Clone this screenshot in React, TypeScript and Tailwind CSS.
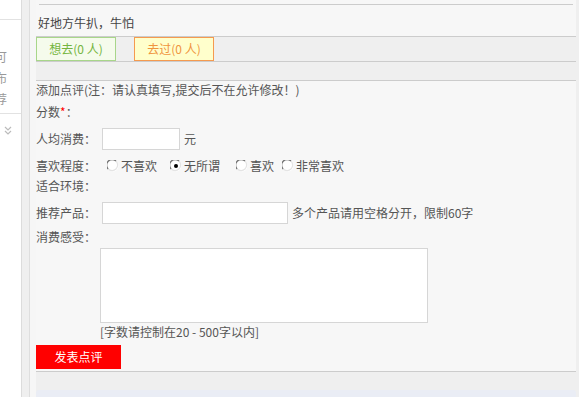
import React from "react";

function Radio({ checked = false }: { checked?: boolean }) {
  return (
    <svg width="12" height="12" viewBox="0 0 12 12" className="shrink-0">
      <circle cx="6" cy="6" r="5.5" fill="#ffffff" />
      <path d="M1.2 9 A5.2 5.2 0 0 1 9 1.2" fill="none" stroke="#6f6f6f" strokeWidth="1.2" />
      <path d="M9 1.2 A5.2 5.2 0 0 1 1.2 9" fill="none" stroke="#e4e4e4" strokeWidth="1.2" />
      {checked && <circle cx="6" cy="6" r="2" fill="#000000" />}
    </svg>
  );
}

export default function App() {
  return (
    <div className="flex w-[579px] h-[397px] overflow-hidden bg-[#efefef] text-[12px] leading-[18px] text-[#555] font-['Noto_Sans_CJK_SC','Noto_Sans',sans-serif]">
      {/* left sidebar */}
      <aside className="w-[22px] shrink-0 bg-white border-r border-[#dcdcdc] overflow-hidden flex flex-col text-[#999]">
        <div className="shrink-0 mt-[19px] h-px bg-[#e2e2e2]" />
        <div className="shrink-0 mt-[28px] ml-[-5px] whitespace-nowrap">可</div>
        <div className="shrink-0 mt-[3px] ml-[-5px] whitespace-nowrap">布</div>
        <div className="shrink-0 mt-[3px] ml-[-5px] whitespace-nowrap">荐</div>
        <div className="shrink-0 mt-[5px] h-px bg-[#e2e2e2]" />
        <svg width="8" height="10" viewBox="0 0 8 10" className="shrink-0 mt-[12px] ml-[4px]">
          <path d="M1 1 L4 4 L7 1 M1 5 L4 8 L7 5" fill="none" stroke="#bbbbbb" strokeWidth="1.2" />
        </svg>
      </aside>
      <div className="w-[8px] shrink-0 bg-[#efefef] border-r border-[#dedede]" />
      <div className="w-[6px] shrink-0 bg-[#f6f6f6]" />

      {/* main */}
      <main className="w-[540px] shrink-0 flex flex-col">
        <div className="shrink-0 h-[36px] bg-[#f7f7f7] pt-[4px]">
          <div className="mx-[3px] h-px bg-[#cccccc]" />
          <div className="mt-[9px] ml-[2px] text-[#444]">好地方牛扒，牛怕</div>
        </div>
        <div className="shrink-0 border-t border-b border-[#cccccc] bg-[#efefef] flex">
          <div className="w-[80px] h-[24px] border border-[#a8d68a] bg-[#f5fbec] text-[#74b53e] flex items-center justify-center">
            想去(0 人)
          </div>
          <div className="ml-[18px] w-[80px] h-[24px] border border-[#f59a4f] bg-[#ffffcc] text-[#f0953e] flex items-center justify-center">
            去过(0 人)
          </div>
        </div>
        <div className="shrink-0 h-[19px] border-b border-[#cccccc] bg-[#efefef]" />

        <div className="shrink-0 h-[291px] bg-[#f7f7f7] border-b border-[#cccccc] flex flex-col">
          <div className="shrink-0 h-[18px] whitespace-nowrap">添加点评(注：请认真填写,提交后不在允许修改！)</div>
          <div className="shrink-0 h-[18px] mt-[4px]">
            分数<span className="text-[#ff0000]">*</span>：
          </div>
          <div className="shrink-0 h-[22px] mt-[7px] flex items-center">
            <span className="w-[66px] shrink-0">人均消费：</span>
            <div className="w-[78px] h-[22px] bg-white border border-[#d6d6d6]" />
            <span className="ml-[4px]">元</span>
          </div>
          <div className="shrink-0 h-[18px] mt-[7px] flex items-center whitespace-nowrap">
            <span className="w-[66px] shrink-0">喜欢程度：</span>
            <span className="ml-[5px]"><Radio /></span>
            <span className="ml-[2px]">不喜欢</span>
            <span className="ml-[13px]"><Radio checked /></span>
            <span className="ml-[2px]">无所谓</span>
            <span className="ml-[16px]"><Radio /></span>
            <span className="ml-[2px]">喜欢</span>
            <span className="ml-[8px]"><Radio /></span>
            <span className="ml-[2px]">非常喜欢</span>
          </div>
          <div className="shrink-0 h-[18px] mt-[2px]">适合环境：</div>
          <div className="shrink-0 h-[22px] mt-[7px] flex items-center whitespace-nowrap">
            <span className="w-[66px] shrink-0">推荐产品：</span>
            <div className="w-[186px] h-[22px] bg-white border border-[#d6d6d6]" />
            <span className="ml-[4px]">多个产品请用空格分开，限制60字</span>
          </div>
          <div className="shrink-0 h-[18px] mt-[4px]">消费感受：</div>
          <div className="shrink-0 ml-[64px] mt-[2px] w-[328px] h-[75px] bg-white border border-[#d6d6d6]" />
          <div className="shrink-0 ml-[64px] h-[18px]">[字数请控制在20 - 500字以内]</div>
          <div className="shrink-0 mt-[4px] w-[85px] h-[24px] bg-[#ff0000] text-white flex items-center justify-center">
            发表点评
          </div>
        </div>
        <div className="shrink-0 h-[18px] bg-[#efefef]" />
        <div className="shrink-0 h-[10px] bg-[#eaedf5] rounded-t-[3px]" />
      </main>
      <div className="flex-1 bg-[#efefef]" />
    </div>
  );
}
